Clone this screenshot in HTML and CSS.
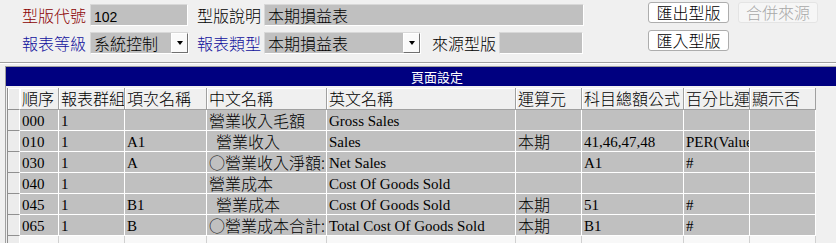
FILE: index.html
```html
<!DOCTYPE html>
<html>
<head>
    <title>型版設定</title>
    <link rel="stylesheet" href="styles.css">
</head>
<body>
    <div class="top">
        <div class="form">
            <div class="row">
                <span class="label code">型版代號</span>
                <div class="field w-code"><span class="num">102</span></div>
                <span class="label gap-a">型版說明</span>
                <div class="field w-desc">本期損益表</div>
            </div>
            <div class="row">
                <span class="label blue">報表等級</span>
                <div class="select w-level"><span class="val">系統控制</span><span class="drop"><i></i></span></div>
                <span class="label blue gap-b">報表類型</span>
                <div class="select w-type"><span class="val">本期損益表</span><span class="drop"><i></i></span></div>
                <span class="label gap-c">來源型版</span>
                <div class="field w-src"></div>
            </div>
        </div>
        <div class="buttons">
            <div class="btn-row">
                <button class="btn">匯出型版</button>
                <button class="btn" disabled>合併來源</button>
            </div>
            <div class="btn-row">
                <button class="btn">匯入型版</button>
            </div>
        </div>
    </div>

    <div class="panel">
        <div class="caption">頁面設定</div>
        <div class="grid">
            <div class="hd sel"></div>
            <div class="hd">順序</div>
            <div class="hd">報表群組</div>
            <div class="hd">項次名稱</div>
            <div class="hd">中文名稱</div>
            <div class="hd">英文名稱</div>
            <div class="hd">運算元</div>
            <div class="hd">科目總額公式</div>
            <div class="hd">百分比運算</div>
            <div class="hd">顯示否</div>

            <div class="sel"></div>
            <div class="cell en">000</div>
            <div class="cell en">1</div>
            <div class="cell en"></div>
            <div class="cell cjk">營業收入毛額</div>
            <div class="cell en">Gross Sales</div>
            <div class="cell cjk"></div>
            <div class="cell en"></div>
            <div class="cell en"></div>
            <div class="cell en"></div>

            <div class="sel"></div>
            <div class="cell en">010</div>
            <div class="cell en">1</div>
            <div class="cell en">A1</div>
            <div class="cell cjk">  營業收入</div>
            <div class="cell en">Sales</div>
            <div class="cell cjk">本期</div>
            <div class="cell en">41,46,47,48</div>
            <div class="cell en">PER(Value,A)</div>
            <div class="cell en"></div>

            <div class="sel"></div>
            <div class="cell en">030</div>
            <div class="cell en">1</div>
            <div class="cell en">A</div>
            <div class="cell cjk">○營業收入淨額:</div>
            <div class="cell en">Net Sales</div>
            <div class="cell cjk"></div>
            <div class="cell en">A1</div>
            <div class="cell en">#</div>
            <div class="cell en"></div>

            <div class="sel"></div>
            <div class="cell en">040</div>
            <div class="cell en">1</div>
            <div class="cell en"></div>
            <div class="cell cjk">營業成本</div>
            <div class="cell en">Cost Of Goods Sold</div>
            <div class="cell cjk"></div>
            <div class="cell en"></div>
            <div class="cell en"></div>
            <div class="cell en"></div>

            <div class="sel"></div>
            <div class="cell en">045</div>
            <div class="cell en">1</div>
            <div class="cell en">B1</div>
            <div class="cell cjk">  營業成本</div>
            <div class="cell en">Cost Of Goods Sold</div>
            <div class="cell cjk">本期</div>
            <div class="cell en">51</div>
            <div class="cell en">#</div>
            <div class="cell en"></div>

            <div class="sel"></div>
            <div class="cell en">065</div>
            <div class="cell en">1</div>
            <div class="cell en">B</div>
            <div class="cell cjk">○營業成本合計:</div>
            <div class="cell en">Total Cost Of Goods Sold</div>
            <div class="cell cjk">本期</div>
            <div class="cell en">B1</div>
            <div class="cell en">#</div>
            <div class="cell en"></div>

            <div class="sel"></div>
            <div class="cell blank"></div>
            <div class="cell blank"></div>
            <div class="cell blank"></div>
            <div class="cell blank"></div>
            <div class="cell blank"></div>
            <div class="cell blank"></div>
            <div class="cell blank"></div>
            <div class="cell blank"></div>
            <div class="cell blank"></div>
        </div>
    </div>
</body>
</html>
```

FILE: styles.css
```css
body {
    margin: 0;
    background-color: #f0f0f0;
    font-family: "Noto Sans CJK TC", sans-serif;
    font-size: 16px;
    color: #000;
    overflow: hidden;
}
.top {
    display: flex;
    height: 60px;
    padding-top: 2px;
    border-bottom: 1px solid #a0a0a0;
    box-shadow: 0 1px 0 #fff;
}
.form {
    display: flex;
    flex-direction: column;
    gap: 6px;
    padding: 2px 0 0 22px;
}
.row {
    display: flex;
    align-items: center;
    height: 22px;
}
.label {
    width: 64px;
    line-height: 22px;
    white-space: nowrap;
    font-weight: 300;
}
.code {
    color: #8b0000;
}
.blue {
    color: #10109c;
}
.gap-a { margin-left: 9px; }
.gap-b { margin-left: 8px; }
.gap-c { margin-left: 11px; }
.field, .select {
    box-sizing: border-box;
    height: 22px;
    margin-left: 4px;
    background-color: #c0c0c0;
    border: 1px solid #d8d8d8;
    border-bottom-color: #fff;
    border-right-color: #fff;
    line-height: 20px;
    padding-left: 3px;
    font-size: 16px;
    font-weight: 300;
    overflow: hidden;
    white-space: nowrap;
}
.gap-a + .field, .gap-b + .select, .gap-c + .field {
    margin-left: 3px;
}
.num {
    font-family: "Liberation Sans", sans-serif;
    font-size: 14px;
    font-weight: 400;
}
.w-code { width: 98px; }
.w-desc { width: 320px; }
.w-level { width: 99px; }
.w-type { width: 157px; }
.w-src { width: 84px; }
.select {
    display: flex;
    justify-content: space-between;
    padding-right: 0;
}
.drop {
    box-sizing: border-box;
    width: 17px;
    height: 20px;
    background-color: #fafafa;
    border: 1px solid #fff;
    border-right-color: #707070;
    border-bottom-color: #707070;
    display: flex;
    align-items: center;
    justify-content: center;
}
.drop i {
    width: 0;
    height: 0;
    border-left: 3px solid transparent;
    border-right: 3px solid transparent;
    border-top: 4px solid #000;
}
.buttons {
    display: flex;
    flex-direction: column;
    gap: 7px;
    margin-left: 64px;
}
.btn-row {
    display: flex;
    gap: 9px;
}
.btn {
    width: 81px;
    height: 21px;
    padding: 0;
    background-color: #fff;
    border: 1px solid #adadad;
    border-radius: 3px;
    font-family: "Noto Sans CJK TC", sans-serif;
    font-size: 16px;
    font-weight: 300;
    line-height: 19px;
    color: #000;
}
.btn:disabled {
    width: 80px;
    background-color: #f6f6f6;
    border-color: #e4e4e4;
    color: #a8a8a8;
}
.panel {
    margin: 3px 0 0 5px;
    border-top: 1px solid #a0a0a0;
    border-left: 1px solid #a0a0a0;
}
.caption {
    height: 19px;
    background-color: #000080;
    color: #fff;
    font-size: 13px;
    line-height: 19px;
    text-align: center;
    padding-left: 32px;
}
.grid {
    display: grid;
    grid-template-columns: 13px 39px 66px 82px 120px 189px 66px 102px 66px 66px;
    grid-template-rows: 22px;
    grid-auto-rows: 21px;
    width: 809px;
    margin: 2px 0 0 1px;
}
.hd {
    box-sizing: border-box;
    background-color: #f0f0f0;
    border-right: 1px solid #a0a0a0;
    border-bottom: 1px solid #a0a0a0;
    box-shadow: inset 1px 1px 0 #fff;
    padding-left: 2px;
    line-height: 21px;
    font-weight: 300;
    white-space: nowrap;
    overflow: hidden;
}
.sel {
    box-sizing: border-box;
    background-color: #ececec;
    border-left: 1px solid #909090;
    border-bottom: 1px solid #909090;
    border-right: 1px solid #fff;
}
.hd.sel {
    padding: 0;
}
.cell {
    box-sizing: border-box;
    background-color: #c0c0c0;
    border-right: 1px solid #fff;
    border-bottom: 1px solid #fff;
    padding: 1px 0 0 2px;
    line-height: 19px;
    white-space: pre;
    overflow: hidden;
}
.en {
    font-family: "Liberation Serif", serif;
    font-size: 15px;
    padding-top: 2px;
}
.cjk {
    font-family: "Noto Sans CJK TC", sans-serif;
    font-size: 16px;
    font-weight: 300;
}
.blank {
    background-color: #f8f8f8;
    border-right-color: #d0d0d0;
}
```
